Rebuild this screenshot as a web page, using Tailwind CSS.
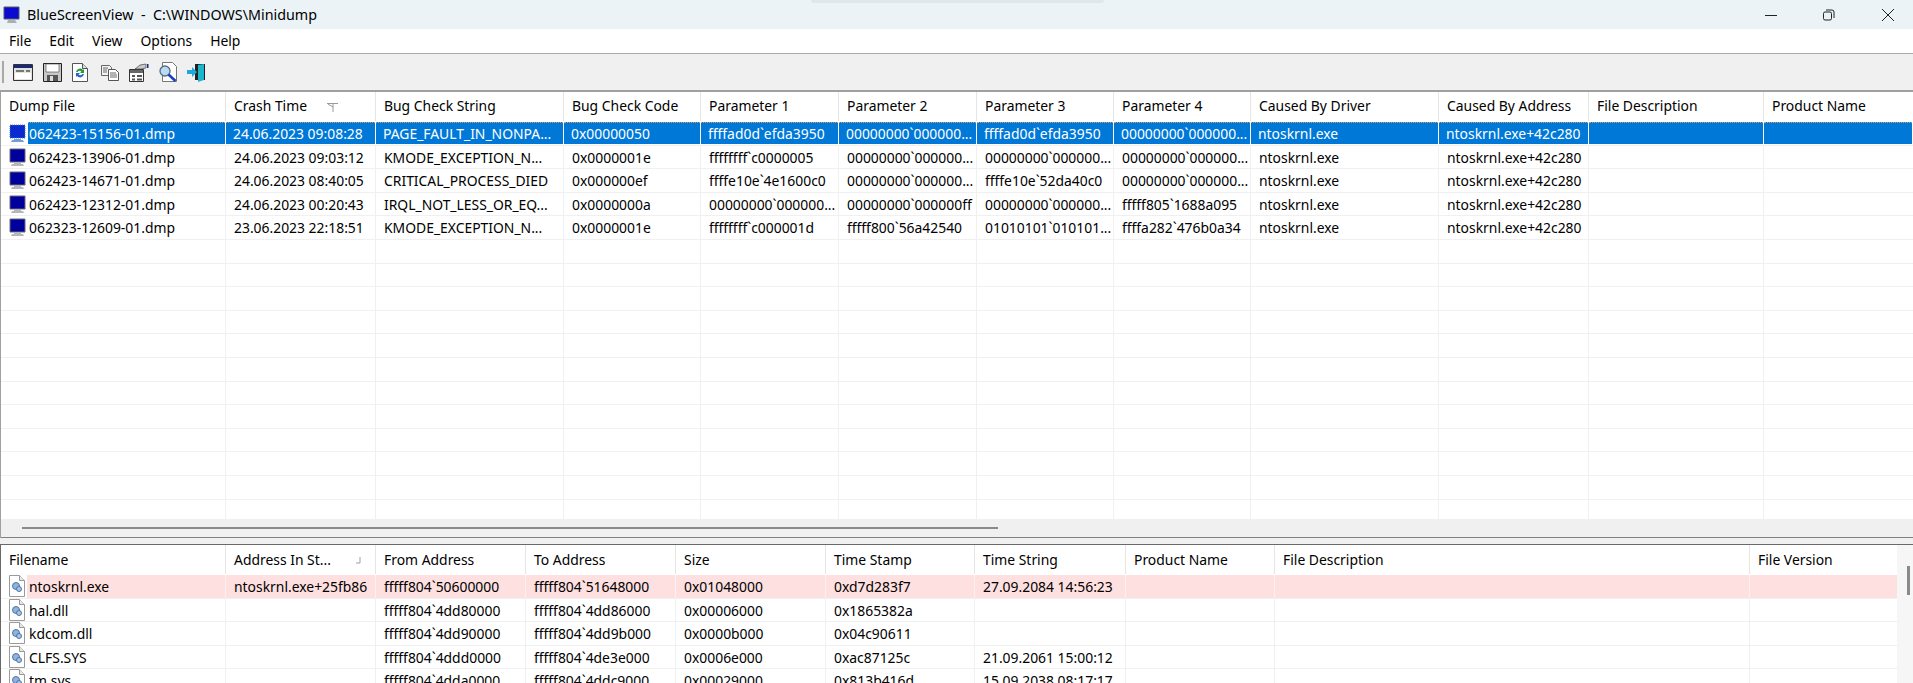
<!DOCTYPE html>
<html lang="en">
<head>
    <meta charset="UTF-8">
    <title>BlueScreenView</title>
    <script src="https://cdn.jsdelivr.net/npm/@tailwindcss/browser@4"></script>
</head>
<body class="bg-white">
    <div class="relative w-[1913px] h-[683px] overflow-hidden flex flex-col bg-white text-black text-[13.9px] font-['Noto_Sans','Open_Sans',sans-serif]">
        <!-- faint shadow of something behind the window -->
        <div class="absolute left-[811px] top-0 w-[293px] h-[3px] rounded-b-lg bg-[#e1e6e9]"></div>

        <!-- Title bar -->
        <div class="h-[29px] shrink-0 flex items-center bg-[#ecf3f7]">
            <svg class="ml-[3px] w-[17px] h-[18px]" viewBox="0 0 17 18">
                <path d="M1 1h15v12H1z" fill="#0a0ad0" stroke="#555a66"/>
                <path d="M5 14h7l2 3H4z" fill="#aab0b8"/>
            </svg>
            <span class="ml-[7px] whitespace-pre text-[14.3px]">BlueScreenView  -  C:\WINDOWS\Minidump</span>
            <div class="ml-auto flex items-center">
                <svg class="w-[12px] h-[12px]" viewBox="0 0 12 12"><path d="M0 6.500h12" stroke="#222" fill="none"/></svg>
                <svg class="ml-[46px] w-[12px] h-[12px]" viewBox="0 0 12 12"><path d="M.5 4.500q0-1.500 1.500-1.500h5q1.500 0 1.500 1.500v5q0 1.500-1.500 1.500h-5q-1.500 0-1.500-1.500zM3 1h6q2 0 2 2v6" stroke="#222" fill="none"/></svg>
                <svg class="ml-[47px] mr-[19px] w-[12px] h-[12px]" viewBox="0 0 12 12"><path d="M0 0l12 12M12 0L0 12" stroke="#222" fill="none"/></svg>
            </div>
        </div>

        <!-- Menu -->
        <div class="h-[25px] shrink-0 flex items-center gap-[18px] pl-[9px] pt-[1px] border-b border-[#a9a9a9]">
            <span>File</span><span>Edit</span><span>View</span><span>Options</span><span>Help</span>
        </div>

        <!-- Toolbar -->
        <div class="h-[36px] shrink-0 flex items-center bg-[#f0f0f0]">
            <div class="ml-[2px] w-[2px] h-[22px] bg-[#a8a8a8]"></div>
            <svg class="ml-[9px] w-[20px] h-[17px]" viewBox="0 0 20 17">
                <path d="M.5.500h19v16H.5z" fill="#e4e2dc" stroke="#333"/>
                <path d="M1 1h18v3H1z" fill="#1a2a7a"/>
                <path d="M3 6h8v2H3zM13 6h4v2h-4z" fill="#777"/>
                <path d="M2 9h16v6H2z" fill="#fff"/>
            </svg>
            <svg class="ml-[10px] w-[19px] h-[19px]" viewBox="0 0 19 19">
                <path d="M.5.500h18v18H.5z" fill="#c8c8c8" stroke="#222"/>
                <path d="M3 1h13v8H3z" fill="#fff" stroke="#444" stroke-width=".6"/>
                <path d="M4 12h11v6H4z" fill="#555"/>
                <path d="M7 13h3v5H7z" fill="#ddd"/>
            </svg>
            <svg class="ml-[10px] w-[16px] h-[19px]" viewBox="0 0 16 19">
                <path d="M.5.500h10l5 5v13H.5z" fill="#fff" stroke="#555"/>
                <path d="M10.500.500v5h5" fill="#ddd" stroke="#555"/>
                <path d="M4 9a4 4 0 0 1 7-2l1-1v4H8l1.500-1.500A2.500 2.500 0 0 0 5.500 9z" fill="#1f9d36"/>
                <path d="M12 11a4 4 0 0 1-7 2l-1 1v-4h4l-1.500 1.500a2.500 2.500 0 0 0 4-.5z" fill="#2a63c8"/>
            </svg>
            <svg class="ml-[13px] w-[18px] h-[17px]" viewBox="0 0 18 17">
                <path d="M.5 1.500h8l2 2v8H.5z" fill="#f4f4f4" stroke="#666"/>
                <path d="M7.500 5.500h7l3 3v8h-10z" fill="#fff" stroke="#555"/>
                <path d="M2 4h5M2 6h4M2 8h4M9 9h6M9 11h7M9 13h7" stroke="#666" fill="none"/>
            </svg>
            <svg class="ml-[10px] w-[20px] h-[19px]" viewBox="0 0 20 19">
                <path d="M.5 6.500h14v12H.5z" fill="#fff" stroke="#333"/>
                <path d="M1 7h13v3H1z" fill="#666"/>
                <path d="M3 12h3v2H3zM3 15.500h3v2H3zM8 12h5v2H8zM8 15.500h5v2H8z" fill="#555"/>
                <path d="M6 6l5-4 6-1v4l-5 1z" fill="#c8c8c8" stroke="#444" stroke-width=".7"/>
                <path d="M18 1h1.500v4H18z" fill="#1a2a8a"/>
            </svg>
            <svg class="ml-[10px] w-[19px] h-[21px]" viewBox="0 0 19 21">
                <path d="M3.500.500h10l4 4v15h-14z" fill="#fff" stroke="#777"/>
                <circle cx="6" cy="9" r="5" fill="#b8dcf4" stroke="#5a6a80" stroke-width="1.300"/>
                <path d="M9.500 12.500l7 6.500" stroke="#1b3fc0" stroke-width="2.600" fill="none"/>
            </svg>
            <svg class="ml-[9px] w-[19px] h-[19px]" viewBox="0 0 19 19">
                <path d="M8 1h10v16H8z" fill="#222"/>
                <path d="M11 2l6-1v16l-6 2z" fill="#1cb6cc"/>
                <path d="M0 7h5V4l5 5-5 5v-3H0z" fill="#20a8dc"/>
            </svg>
        </div>

        <!-- Crash list -->
        <div class="flex-1 min-h-0 flex flex-col border-t-2 border-l border-[#a0a0a0]">
            <div id="dumpHead" class="h-[29px] shrink-0 grid grid-cols-[225px_150px_188px_137px_138px_138px_137px_137px_188px_150px_175px_149px] items-stretch"></div>
            <div id="dumpRows" class="flex-1 min-h-0 overflow-hidden pt-[1px]"></div>
            <div class="h-[19px] shrink-0 flex items-center bg-[#f0f0f0] border-b border-[#808080]">
                <div class="ml-[21px] w-[976px] h-[2px] bg-[#8a8a8a]"></div>
            </div>
        </div>

        <!-- Splitter -->
        <div class="h-[6px] shrink-0 bg-[#f0f0f0]"></div>

        <!-- Driver list -->
        <div class="h-[139px] shrink-0 flex border-t border-l border-[#696969] overflow-hidden">
            <div class="w-[1896px] shrink-0">
                <div id="driverHead" class="h-[29px] grid grid-cols-[225px_150px_150px_150px_150px_149px_151px_149px_475px_147px]"></div>
                <div id="driverRows" class="pt-[1px]"></div>
            </div>
            <div class="flex-1 bg-[#f6f6f6] relative">
                <div class="absolute left-[10px] top-[21px] w-[3px] h-[29px] bg-[#8a8a8a]"></div>
            </div>
        </div>
    </div>

    <script>
        const monitor = '<svg class="absolute left-[8px] top-[2px] w-[17px] h-[19px]" viewBox="0 0 17 19"><path d="M1 1h15v13H1z" fill="#00009c" stroke="#6a6a72"/><path d="M5 15h7v1h2l1 2H2l1-2h2z" fill="#b4b8bc"/></svg>';
        const monitorSelected = '<svg class="absolute left-[8px] top-[2px] w-[17px] h-[19px]" viewBox="0 0 17 19"><path d="M1 1h15v13H1z" fill="#0a2ad0" stroke="#3f78c4" stroke-dasharray="1 1"/><path d="M5 15h7v1h2l1 2H2l1-2h2z" fill="#6fa0d8"/></svg>';
        const moduleIcon = '<svg class="absolute left-[8px] top-[0px] w-[16px] h-[22px]" viewBox="0 0 16 22"><path d="M.5.500h10l5 5v16H.5z" fill="#fff" stroke="#9a9a9a"/><path d="M10.500.500v5h5" fill="#e8e8e8" stroke="#9a9a9a"/><circle cx="7" cy="11" r="3.500" fill="#8fb4dc" stroke="#4f74a8"/><circle cx="10" cy="14" r="2.500" fill="#a8c4e4" stroke="#4f74a8"/></svg>';

        const dumpHead = ['Dump File', 'Crash Time', 'Bug Check String', 'Bug Check Code', 'Parameter 1', 'Parameter 2', 'Parameter 3', 'Parameter 4', 'Caused By Driver', 'Caused By Address', 'File Description', 'Product Name'];
        const dumps = [
            ['062423-15156-01.dmp', '24.06.2023 09:08:28', 'PAGE_FAULT_IN_NONPA...', '0x00000050', 'ffffad0d`efda3950', '00000000`000000...', 'ffffad0d`efda3950', '00000000`000000...', 'ntoskrnl.exe', 'ntoskrnl.exe+42c280'],
            ['062423-13906-01.dmp', '24.06.2023 09:03:12', 'KMODE_EXCEPTION_N...', '0x0000001e', 'ffffffff`c0000005', '00000000`000000...', '00000000`000000...', '00000000`000000...', 'ntoskrnl.exe', 'ntoskrnl.exe+42c280'],
            ['062423-14671-01.dmp', '24.06.2023 08:40:05', 'CRITICAL_PROCESS_DIED', '0x000000ef', 'ffffe10e`4e1600c0', '00000000`000000...', 'ffffe10e`52da40c0', '00000000`000000...', 'ntoskrnl.exe', 'ntoskrnl.exe+42c280'],
            ['062423-12312-01.dmp', '24.06.2023 00:20:43', 'IRQL_NOT_LESS_OR_EQ...', '0x0000000a', '00000000`000000...', '00000000`000000ff', '00000000`000000...', 'fffff805`1688a095', 'ntoskrnl.exe', 'ntoskrnl.exe+42c280'],
            ['062323-12609-01.dmp', '23.06.2023 22:18:51', 'KMODE_EXCEPTION_N...', '0x0000001e', 'ffffffff`c000001d', 'fffff800`56a42540', '01010101`010101...', 'ffffa282`476b0a34', 'ntoskrnl.exe', 'ntoskrnl.exe+42c280']
        ];

        const driverHead = ['Filename', 'Address In St...', 'From Address', 'To Address', 'Size', 'Time Stamp', 'Time String', 'Product Name', 'File Description', 'File Version'];
        const drivers = [
            ['ntoskrnl.exe', 'ntoskrnl.exe+25fb86', 'fffff804`50600000', 'fffff804`51648000', '0x01048000', '0xd7d283f7', '27.09.2084 14:56:23', '', '', ''],
            ['hal.dll', '', 'fffff804`4dd80000', 'fffff804`4dd86000', '0x00006000', '0x1865382a', '', '', '', ''],
            ['kdcom.dll', '', 'fffff804`4dd90000', 'fffff804`4dd9b000', '0x0000b000', '0x04c90611', '', '', '', ''],
            ['CLFS.SYS', '', 'fffff804`4ddd0000', 'fffff804`4de3e000', '0x0006e000', '0xac87125c', '21.09.2061 15:00:12', '', '', ''],
            ['tm.sys', '', 'fffff804`4dda0000', 'fffff804`4ddc9000', '0x00029000', '0x813b416d', '15.09.2038 08:17:17', '', '', '']
        ];

        const arrowDown = '<svg class="absolute left-[101px] top-[11px] w-[12px] h-[10px]" viewBox="0 0 12 10"><path d="M0 .5h11M1 1l5 3M6 1v8" stroke="#9a9a9a" fill="none"/></svg>';
        const arrowUp = '<svg class="absolute left-[129px] top-[11px] w-[6px] h-[8px]" viewBox="0 0 6 8"><path d="M1 7h4V1" stroke="#a0a0a0" fill="none"/></svg>';

        function header(labels, arrow, cellClass) {
            return labels.map((label, i) =>
                `<div class="relative flex items-center pl-[8px] ${cellClass} border-r border-[#e5e5e5] last:border-r-0 whitespace-nowrap overflow-hidden">${label}${i === 1 ? arrow : ''}</div>`
            ).join('');
        }

        function dumpRow(cells, i) {
            const selected = i === 0;
            const html = dumpHead.map((_, c) => {
                const text = cells[c] || '';
                if (selected) {
                    if (c === 0) return `<div class="relative pl-[27px] h-full">${monitorSelected}<div class="h-[22px] pl-[1px] pt-[2px] flex items-center bg-[#0078d7] text-white border-t border-dotted border-[#d9a066] whitespace-nowrap mr-[1px]">${text}</div></div>`;
                    return `<div class="h-[22px] pl-[7px] pt-[2px] mr-[1px] flex items-center bg-[#0078d7] text-white border-t border-dotted border-[#d9a066] whitespace-nowrap overflow-hidden">${text}</div>`;
                }
                if (c === 0) return `<div class="relative pl-[28px] pt-[2px] flex items-center h-full border-r border-[#f0f0f0] whitespace-nowrap">${text ? monitor : ''}${text}</div>`;
                return `<div class="pl-[8px] pt-[2px] flex items-center h-full border-r border-[#f0f0f0] last:border-r-0 whitespace-nowrap overflow-hidden">${text}</div>`;
            }).join('');
            return `<div class="h-[23.6px] grid grid-cols-[225px_150px_188px_137px_138px_138px_137px_137px_188px_150px_175px_149px] border-b border-[#f0f0f0]">${html}</div>`;
        }

        function driverRow(cells, i) {
            const flagged = i === 0;
            const html = cells.map((text, c) => {
                const bg = flagged ? 'bg-[#ffe0e0] border-[#fff0f0]' : 'border-[#f0f0f0]';
                if (c === 0) return `<div class="relative pl-[26px] h-full">${moduleIcon}<div class="h-full pl-[2px] pt-[2px] flex items-center border-r whitespace-nowrap ${bg}">${text}</div></div>`;
                return `<div class="pl-[8px] pt-[2px] flex items-center h-full border-r last:border-r-0 whitespace-nowrap overflow-hidden ${bg}">${text}</div>`;
            }).join('');
            return `<div class="h-[23.6px] grid grid-cols-[225px_150px_150px_150px_150px_149px_151px_149px_475px_147px] border-b border-[#f0f0f0]">${html}</div>`;
        }

        document.getElementById('dumpHead').innerHTML = header(dumpHead, arrowDown, '');
        const emptyRows = Array.from({ length: 12 }, () => []);
        document.getElementById('dumpRows').innerHTML = dumps.concat(emptyRows).map(dumpRow).join('');
        document.getElementById('driverHead').innerHTML = header(driverHead, arrowUp, 'pt-[2px]');
        document.getElementById('driverRows').innerHTML = drivers.map(driverRow).join('');
    </script>
</body>
</html>
